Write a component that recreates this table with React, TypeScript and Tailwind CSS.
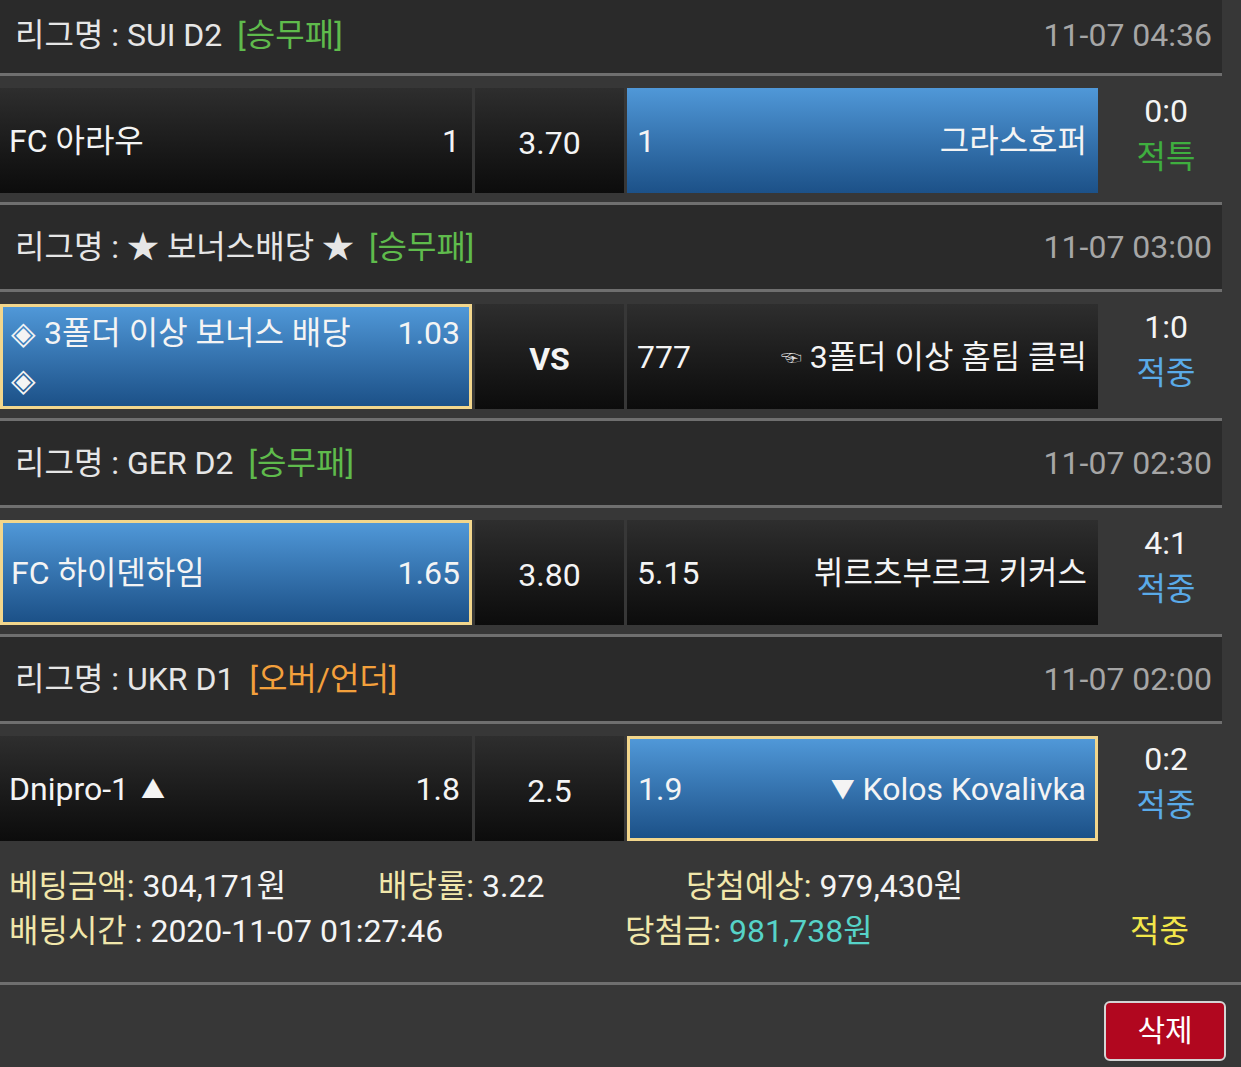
import React from 'react'

type Game = {
  league: string
  kind: string
  kindColor: string
  time: string
  home: React.ReactNode
  homeOdds: string
  draw: string
  away: React.ReactNode
  awayOdds: string
  picked: 'home' | 'away'
  border: boolean
  score: string
  status: string
  statusColor: string
  bonus?: boolean
}

const games: Game[] = [
  {
    league: 'SUI D2',
    kind: '[승무패]',
    kindColor: 'text-[#5fbb4c]',
    time: '11-07 04:36',
    home: 'FC 아라우',
    homeOdds: '1',
    draw: '3.70',
    away: '그라스호퍼',
    awayOdds: '1',
    picked: 'away',
    border: false,
    score: '0:0',
    status: '적특',
    statusColor: 'text-[#3fae3f]',
  },
  {
    league: '★ 보너스배당 ★',
    kind: '[승무패]',
    kindColor: 'text-[#5fbb4c]',
    time: '11-07 03:00',
    home: (
      <>
        ◈ 3폴더 이상 보너스 배당
        <br />◈
      </>
    ),
    homeOdds: '1.03',
    draw: 'VS',
    away: (
      <>
        <span className="text-[21px] text-[#dcdcdc] mr-[8px] align-middle">☜</span>3폴더 이상 홈팀 클릭
      </>
    ),
    awayOdds: '777',
    picked: 'home',
    border: true,
    score: '1:0',
    status: '적중',
    statusColor: 'text-[#5aaae8]',
    bonus: true,
  },
  {
    league: 'GER D2',
    kind: '[승무패]',
    kindColor: 'text-[#5fbb4c]',
    time: '11-07 02:30',
    home: 'FC 하이덴하임',
    homeOdds: '1.65',
    draw: '3.80',
    away: '뷔르츠부르크 키커스',
    awayOdds: '5.15',
    picked: 'home',
    border: true,
    score: '4:1',
    status: '적중',
    statusColor: 'text-[#5aaae8]',
  },
  {
    league: 'UKR D1',
    kind: '[오버/언더]',
    kindColor: 'text-[#f3a03c]',
    time: '11-07 02:00',
    home: (
      <>
        Dnipro-1 <span className="text-[24px] align-[2px] ml-[4px]">▲</span>
      </>
    ),
    homeOdds: '1.8',
    draw: '2.5',
    away: (
      <>
        <span className="text-[24px] align-[2px]">▼</span> Kolos Kovalivka
      </>
    ),
    awayOdds: '1.9',
    picked: 'away',
    border: true,
    score: '0:2',
    status: '적중',
    statusColor: 'text-[#5aaae8]',
  },
]

const darkCell = 'bg-linear-to-b from-[#2e2e2e] to-[#0c0c0c]'
const blueCell = 'bg-linear-to-b from-[#5098d8] to-[#1c5188]'

function cellClass(active: boolean, border: boolean) {
  if (!active) return darkCell
  return border ? `${blueCell} border-[3px] border-[#f2d68c]` : blueCell
}

export default function App() {
  return (
    <div className="min-h-screen bg-[#373737] font-['Roboto','Noto_Sans_CJK_KR',sans-serif] text-[32px] text-[#f4f4f4]">
      <div className="w-[1222px]">
        {games.map((g, i) => {
          const last = i === games.length - 1
          const homeActive = g.picked === 'home'
          const awayActive = g.picked === 'away'
          return (
            <div key={i}>
              {/* league header */}
              <div
                className={`flex items-center justify-between bg-[#2a2a2a] border-b-[3px] border-[#6f6f6f] pl-[15px] pr-[10px] ${i === 0 ? 'h-[76px] pb-[3px]' : 'h-[87px]'}`}
              >
                <div className="text-[#e6e6e6]">
                  리그명 : {g.league}
                  <span className={`ml-[15px] ${g.kindColor}`}>{g.kind}</span>
                </div>
                <div className="text-[#a6a6a6]">{g.time}</div>
              </div>

              {/* match row */}
              <div
                className={`flex pt-[12px] pb-[9px] ${last ? 'h-[126px]' : 'h-[129px] border-b-[3px] border-[#6f6f6f]'}`}
              >
                <div
                  className={`w-[472px] h-[105px] flex items-center ${homeActive && g.border ? 'pl-[8px] pr-[9px]' : 'pl-[9px] pr-[12px]'} ${cellClass(homeActive, g.border)}`}
                >
                  {g.bonus ? (
                    <div className="flex w-full justify-between items-start leading-[47px]">
                      <div>{g.home}</div>
                      <div>{g.homeOdds}</div>
                    </div>
                  ) : (
                    <div className="flex w-full justify-between items-center">
                      <div>{g.home}</div>
                      <div>{g.homeOdds}</div>
                    </div>
                  )}
                </div>
                <div
                  className={`ml-[3px] w-[149px] h-[105px] flex items-center justify-center pt-[5px] ${darkCell} ${g.bonus ? 'font-bold' : ''}`}
                >
                  {g.draw}
                </div>
                <div
                  className={`ml-[3px] w-[471px] h-[105px] flex items-center justify-between ${awayActive && g.border ? 'pl-[8px] pr-[9px]' : 'pl-[10px] pr-[11px]'} ${cellClass(awayActive, g.border)}`}
                >
                  <div>{g.awayOdds}</div>
                  <div>{g.away}</div>
                </div>
                <div className="flex-1 flex flex-col items-center pl-[12px] leading-[46px]">
                  <div>{g.score}</div>
                  <div className={g.statusColor}>{g.status}</div>
                </div>
              </div>
            </div>
          )
        })}
      </div>

      {/* bet summary */}
      <div className="w-full pl-[9px] pt-[14px] pb-[28px] leading-[45px] border-b-[3px] border-[#6f6f6f]">
        <div className="flex">
          <div className="w-[369px]">
            <span className="text-[#f1e7ab]">베팅금액:</span> 304,171원
          </div>
          <div className="w-[308px]">
            <span className="text-[#f1e7ab]">배당률:</span> 3.22
          </div>
          <div>
            <span className="text-[#f1e7ab]">당첨예상:</span> 979,430원
          </div>
        </div>
        <div className="flex">
          <div className="w-[616px]">
            <span className="text-[#f1e7ab]">배팅시간</span> : 2020-11-07 01:27:46
          </div>
          <div className="w-[505px]">
            <span className="text-[#f1e7ab]">당첨금:</span>{' '}
            <span className="text-[#56d3c8]">981,738원</span>
          </div>
          <div className="text-[#f2e64a]">적중</div>
        </div>
      </div>

      <div className="flex justify-end pt-[16px] pr-[15px] pb-[8px]">
        <button className="w-[122px] h-[60px] rounded-[6px] border-2 border-[#d4d4d4] bg-[#b1071f] text-white text-[30px] leading-none">
          삭제
        </button>
      </div>
    </div>
  )
}
